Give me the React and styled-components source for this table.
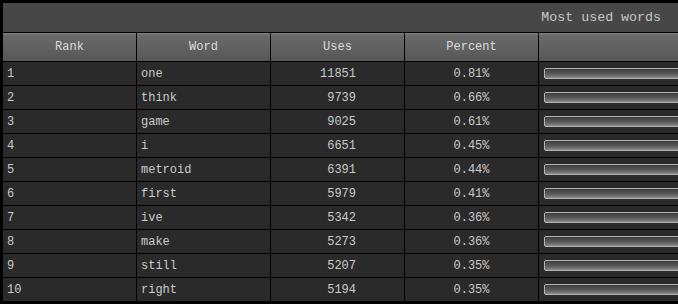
import React from "react";
import styled, { createGlobalStyle } from "styled-components";

const GlobalStyle = createGlobalStyle`
	html, body {
		margin: 0;
		padding: 0;
		background: #000;
		overflow: hidden;
	}
`;

const Wrapper = styled.div`
	padding: 2px 0 0 2px;
	width: 760px;
`;

const Table = styled.table`
	border-collapse: separate;
	border-spacing: 1px;
	background: #000;
	font-family: "Liberation Mono", "Courier New", monospace;
	font-size: 12px;
	table-layout: fixed;
	width: 738px;
`;

const Col = styled.col`
	width: ${(p) => p.$width}px;
`;

const TitleCell = styled.th`
	height: 29px;
	padding: 0 78px 0 0;
	background: #474747;
	color: #c8c8c8;
	font-size: 13.3px;
	font-weight: normal;
	text-align: right;
`;

const HeadCell = styled.th`
	height: 28px;
	padding: 0;
	box-sizing: border-box;
	background: linear-gradient(#7c7c7c 0, #7c7c7c 1px, #6a6a6a 2px, #575757 100%);
	color: #dcdcdc;
	font-weight: normal;
	text-align: center;
`;

const Cell = styled.td`
	height: 23px;
	padding: 0 ${(p) => p.$padRight || 4}px 0 4px;
	box-sizing: border-box;
	background: #2a2a2a;
	color: #cbcbcb;
	text-align: ${(p) => p.$align || "left"};
	white-space: nowrap;
`;

const BarCell = styled.td`
	height: 23px;
	padding: 0 0 0 5px;
	background: #2a2a2a;
`;

const Bar = styled.div`
	height: 11px;
	box-sizing: border-box;
	border: 1px solid #b4b4b4;
	border-radius: 2px;
	background: linear-gradient(#3c3c3c, #5a5a5a 55%, #8a8a8a);
`;

const words = [
	[1, "one", 11851, "0.81%"],
	[2, "think", 9739, "0.66%"],
	[3, "game", 9025, "0.61%"],
	[4, "i", 6651, "0.45%"],
	[5, "metroid", 6391, "0.44%"],
	[6, "first", 5979, "0.41%"],
	[7, "ive", 5342, "0.36%"],
	[8, "make", 5273, "0.36%"],
	[9, "still", 5207, "0.35%"],
	[10, "right", 5194, "0.35%"],
];

function App() {
	return (
		<Wrapper>
			<GlobalStyle />
			<Table>
				<colgroup>
					<Col $width={133} />
					<Col $width={133} />
					<Col $width={133} />
					<Col $width={133} />
					<Col $width={200} />
				</colgroup>
				<thead>
					<tr>
						<TitleCell colSpan={5}>Most used words</TitleCell>
					</tr>
					<tr>
						<HeadCell>Rank</HeadCell>
						<HeadCell>Word</HeadCell>
						<HeadCell>Uses</HeadCell>
						<HeadCell>Percent</HeadCell>
						<HeadCell></HeadCell>
					</tr>
				</thead>
				<tbody>
					{words.map(([rank, word, uses, pct]) => (
						<tr key={rank}>
							<Cell>{rank}</Cell>
							<Cell>{word}</Cell>
							<Cell $align="right" $padRight={48}>{uses}</Cell>
							<Cell $align="center">{pct}</Cell>
							<BarCell>
								<Bar style={{ width: `${Math.max(90, (uses / 11851) * 100)}%` }} />
							</BarCell>
						</tr>
					))}
				</tbody>
			</Table>
		</Wrapper>
	);
}

export default App;
